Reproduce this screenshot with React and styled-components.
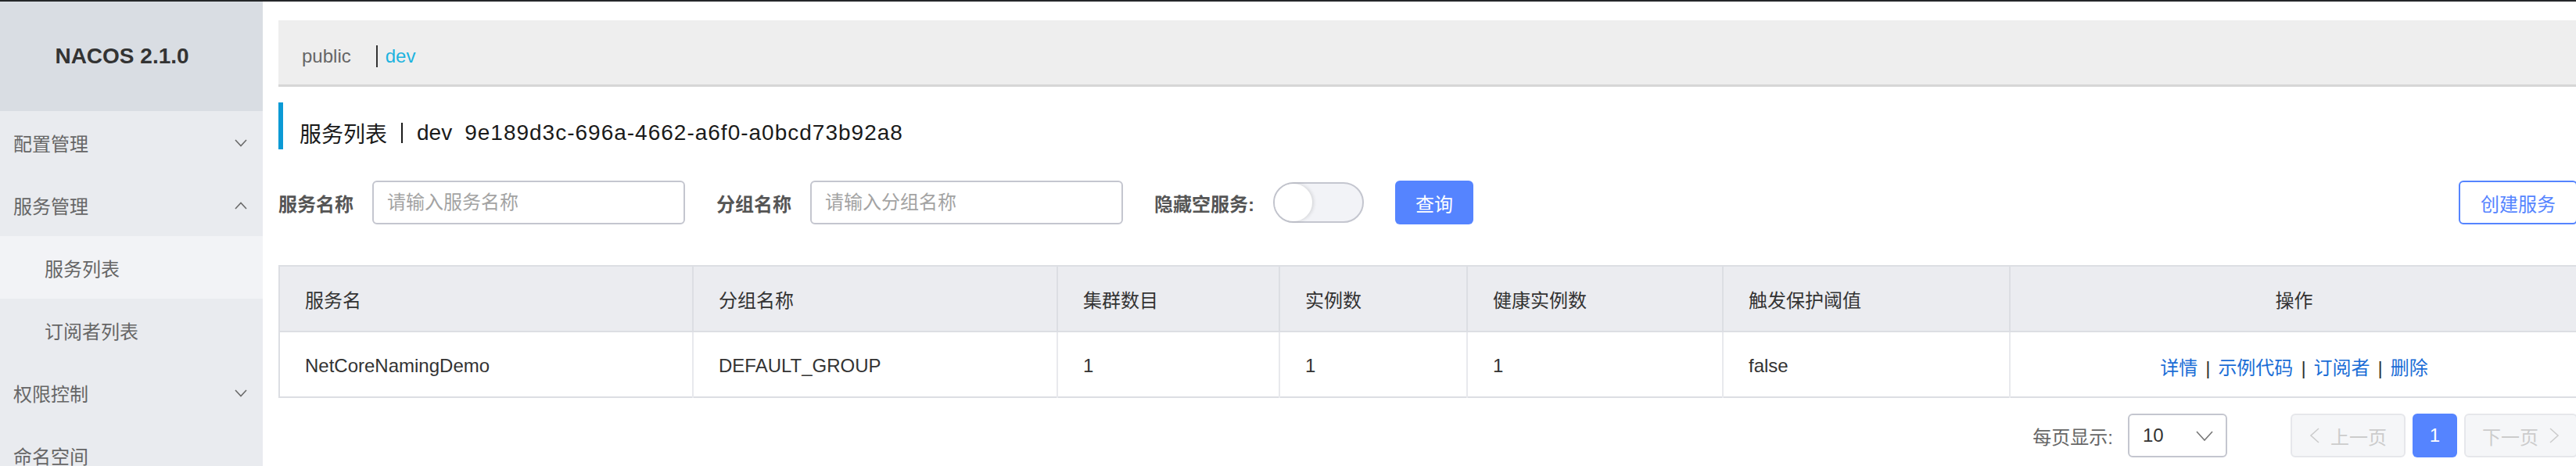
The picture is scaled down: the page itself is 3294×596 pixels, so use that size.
import React from "react";
import styled, { createGlobalStyle, css } from "styled-components";

const FONT = `"Liberation Sans", "Noto Sans CJK SC", Arial, sans-serif`;

const GlobalStyle = createGlobalStyle`
  html, body {
    margin: 0;
    padding: 0;
    background: #ffffff;
    overflow: hidden;
  }
  body {
    font-family: ${FONT};
    color: #333333;
  }
  * { box-sizing: border-box; }
`;

const Page = styled.div`
  display: flex;
  flex-direction: column;
  width: 3316px;
  height: 596px;
  overflow: hidden;
`;

const TopStrip = styled.div`
  height: 2px;
  background: #25272a;
  flex: none;
`;

const Shell = styled.div`
  display: flex;
  flex: 1;
  min-height: 0;
`;

/* ---------- Sidebar ---------- */

const Sidebar = styled.aside`
  width: 336px;
  flex: none;
  background: #e9ebef;
  display: flex;
  flex-direction: column;
  overflow: hidden;
`;

const Logo = styled.div`
  height: 140px;
  flex: none;
  background: #d9dde3;
  display: flex;
  align-items: center;
  justify-content: center;
  padding-right: 24px;
  font-size: 28px;
  font-weight: 700;
  color: #333333;
`;

const Menu = styled.nav`
  display: flex;
  flex-direction: column;
  flex: none;
`;

const MenuItem = styled.div`
  height: 80px;
  flex: none;
  display: flex;
  align-items: center;
  justify-content: space-between;
  padding: 6px 20px 0 ${(p) => (p.$sub ? "57px" : "17px")};
  font-size: 24px;
  line-height: 24px;
  color: #666666;
  background: ${(p) => (p.$active ? "#f2f3f6" : "transparent")};
`;

const ChevronSvg = styled.svg`
  width: 16px;
  height: 10px;
  flex: none;
  overflow: visible;
  margin-top: -4px;
`;

function Chevron({ up }) {
  return (
    <ChevronSvg viewBox="0 0 16 10">
      <polyline
        points={up ? "1,9 8,1.5 15,9" : "1,1 8,8.5 15,1"}
        fill="none"
        stroke="#6b6b6b"
        strokeWidth="1.6"
      />
    </ChevronSvg>
  );
}

/* ---------- Main ---------- */

const Main = styled.main`
  flex: 1;
  min-width: 0;
  padding: 24px 20px 0 20px;
  display: flex;
  flex-direction: column;
`;

const NamespaceBar = styled.div`
  height: 85px;
  flex: none;
  background: #eeeeee;
  border-bottom: 3px solid #d6d6d6;
  display: flex;
  align-items: center;
  padding: 10px 0 0 30px;
  font-size: 24px;
`;

const NsLink = styled.span`
  color: ${(p) => (p.$active ? "#1cb3df" : "#666666")};
`;

const NsSep = styled.span`
  display: inline-block;
  width: 2px;
  height: 28px;
  background: #333333;
  margin: 0 10px 0 32px;
`;

const PageTitle = styled.h1`
  margin: 20px 0 0 0;
  height: 60px;
  flex: none;
  border-left: 6px solid #0b9ad5;
  padding: 17px 0 0 21px;
  display: flex;
  align-items: center;
  font-size: 28px;
  font-weight: 400;
  color: #1a1a1a;
`;

const TitleSep = styled.span`
  display: inline-block;
  width: 2px;
  height: 26px;
  background: #1a1a1a;
  margin: 0 18px 0 18px;
`;

const TitleId = styled.span`
  margin-left: 16px;
  letter-spacing: 1px;
`;

/* ---------- Search form ---------- */

const SearchForm = styled.form`
  margin-top: 40px;
  height: 56px;
  flex: none;
  display: flex;
  align-items: center;
`;

const FormItem = styled.div`
  display: flex;
  align-items: center;
  gap: 24px;
  margin-right: 40px;
`;

const FieldLabel = styled.label`
  font-size: 24px;
  font-weight: 700;
  color: #555555;
  white-space: nowrap;
`;

const TextInput = styled.input`
  width: 400px;
  height: 56px;
  border: 2px solid #c4c6cf;
  border-radius: 6px;
  padding: 0 17px;
  font-family: ${FONT};
  font-size: 24px;
  color: #333333;
  outline: none;
  background: #ffffff;
  &::placeholder {
    color: #a3a3a3;
  }
`;

const Switch = styled.span`
  position: relative;
  display: inline-block;
  width: 116px;
  height: 52px;
  border: 2px solid #c4c6cf;
  border-radius: 26px;
  background: #f2f3f7;
`;

const Knob = styled.span`
  position: absolute;
  left: 0;
  top: 0;
  width: 48px;
  height: 48px;
  border-radius: 50%;
  background: #ffffff;
  box-shadow: 2px 0 4px rgba(0, 0, 0, 0.12);
`;

const buttonBase = css`
  height: 56px;
  border-radius: 6px;
  font-family: ${FONT};
  font-size: 24px;
  padding: 0 26px;
  cursor: pointer;
  white-space: nowrap;
`;

const PrimaryButton = styled.button`
  ${buttonBase};
  border: none;
  background: #5584ff;
  color: #ffffff;
`;

const OutlineButton = styled.button`
  ${buttonBase};
  margin-left: auto;
  border: 2px solid #5584ff;
  background: #ffffff;
  color: #5584ff;
`;

/* ---------- Table ---------- */

const DataTable = styled.table`
  margin-top: 52px;
  width: 2940px;
  table-layout: fixed;
  border-collapse: collapse;
  border: 2px solid #dcdee3;
  font-size: 24px;
`;

const Th = styled.th`
  height: 84px;
  padding: 0 32px;
  background: #ebecf0;
  font-weight: 400;
  color: #333333;
  text-align: ${(p) => (p.$center ? "center" : "left")};
  border-right: 2px solid #dcdee3;
  border-bottom: 2px solid #dcdee3;
`;

const Td = styled.td`
  height: 84px;
  padding: 4px 32px 0 32px;
  color: #333333;
  text-align: ${(p) => (p.$center ? "center" : "left")};
  border-right: 2px solid #e8e9ed;
`;

const ActionLink = styled.a`
  color: #1a6dd6;
  text-decoration: none;
`;

const ActionSep = styled.span`
  color: #333333;
  margin: 0 10px;
`;

/* ---------- Pagination ---------- */

const Pagination = styled.div`
  margin-top: 20px;
  height: 56px;
  display: flex;
  align-items: center;
  justify-content: flex-end;
  font-size: 24px;
`;

const PageSizeLabel = styled.span`
  color: #666666;
  margin-right: 19px;
`;

const Select = styled.div`
  width: 127px;
  height: 56px;
  border: 2px solid #c4c6cf;
  border-radius: 6px;
  display: flex;
  align-items: center;
  justify-content: space-between;
  padding: 0 16px 0 17px;
  color: #333333;
  margin-right: 81px;
`;

const PageButton = styled.button`
  height: 56px;
  border-radius: 6px;
  font-family: ${FONT};
  font-size: 24px;
  display: inline-flex;
  align-items: center;
  justify-content: center;
  gap: 14px;
  padding: 0;
  width: ${(p) => p.$width}px;
  margin-left: ${(p) => p.$gap || 0}px;
  ${(p) =>
    p.$current
      ? css`
          border: none;
          background: #5584ff;
          color: #ffffff;
        `
      : css`
          border: 2px solid #e6e7eb;
          background: #f5f6f8;
          color: #cccccc;
        `}
`;

const ArrowSvg = styled.svg`
  width: 13px;
  height: 20px;
  flex: none;
`;

function Arrow({ dir, color }) {
  return (
    <ArrowSvg viewBox="0 0 13 20">
      <polyline
        points={dir === "left" ? "12,1 2,10 12,19" : "1,1 11,10 1,19"}
        fill="none"
        stroke={color}
        strokeWidth="1.6"
      />
    </ArrowSvg>
  );
}

const SelectArrow = styled.svg`
  width: 22px;
  height: 13px;
`;

/* ---------- Data ---------- */

const menu = [
  { label: "配置管理", chevron: "down" },
  { label: "服务管理", chevron: "up" },
  { label: "服务列表", sub: true, active: true },
  { label: "订阅者列表", sub: true },
  { label: "权限控制", chevron: "down" },
  { label: "命名空间" },
];

const columns = [
  { title: "服务名", width: 529 },
  { title: "分组名称", width: 466 },
  { title: "集群数目", width: 284 },
  { title: "实例数", width: 240 },
  { title: "健康实例数", width: 327 },
  { title: "触发保护阈值", width: 367 },
  { title: "操作", width: 727, center: true },
];

const rows = [
  {
    name: "NetCoreNamingDemo",
    group: "DEFAULT_GROUP",
    clusters: 1,
    instances: 1,
    healthy: 1,
    threshold: "false",
  },
];

const actions = ["详情", "示例代码", "订阅者", "删除"];

export default function App() {
  return (
    <>
      <GlobalStyle />
      <Page>
        <TopStrip />
        <Shell>
          <Sidebar>
            <Logo>NACOS 2.1.0</Logo>
            <Menu>
              {menu.map((m) => (
                <MenuItem key={m.label} $sub={m.sub} $active={m.active}>
                  <span>{m.label}</span>
                  {m.chevron && <Chevron up={m.chevron === "up"} />}
                </MenuItem>
              ))}
            </Menu>
          </Sidebar>
          <Main>
            <NamespaceBar>
              <NsLink>public</NsLink>
              <NsSep />
              <NsLink $active>dev</NsLink>
            </NamespaceBar>

            <PageTitle>
              <span>服务列表</span>
              <TitleSep />
              <span>dev</span>
              <TitleId>9e189d3c-696a-4662-a6f0-a0bcd73b92a8</TitleId>
            </PageTitle>

            <SearchForm onSubmit={(e) => e.preventDefault()}>
              <FormItem>
                <FieldLabel>服务名称</FieldLabel>
                <TextInput placeholder="请输入服务名称" />
              </FormItem>
              <FormItem>
                <FieldLabel>分组名称</FieldLabel>
                <TextInput placeholder="请输入分组名称" />
              </FormItem>
              <FormItem>
                <FieldLabel>隐藏空服务:</FieldLabel>
                <Switch>
                  <Knob />
                </Switch>
              </FormItem>
              <PrimaryButton type="button">查询</PrimaryButton>
              <OutlineButton type="button">创建服务</OutlineButton>
            </SearchForm>

            <DataTable>
              <colgroup>
                {columns.map((c) => (
                  <col key={c.title} style={{ width: c.width }} />
                ))}
              </colgroup>
              <thead>
                <tr>
                  {columns.map((c) => (
                    <Th key={c.title} $center={c.center}>
                      {c.title}
                    </Th>
                  ))}
                </tr>
              </thead>
              <tbody>
                {rows.map((r) => (
                  <tr key={r.name}>
                    <Td>{r.name}</Td>
                    <Td>{r.group}</Td>
                    <Td>{r.clusters}</Td>
                    <Td>{r.instances}</Td>
                    <Td>{r.healthy}</Td>
                    <Td>{r.threshold}</Td>
                    <Td $center>
                      {actions.map((a, i) => (
                        <React.Fragment key={a}>
                          {i > 0 && <ActionSep>|</ActionSep>}
                          <ActionLink href="#">{a}</ActionLink>
                        </React.Fragment>
                      ))}
                    </Td>
                  </tr>
                ))}
              </tbody>
            </DataTable>

            <Pagination>
              <PageSizeLabel>每页显示:</PageSizeLabel>
              <Select>
                <span>10</span>
                <SelectArrow viewBox="0 0 22 13">
                  <polyline
                    points="1,1 11,12 21,1"
                    fill="none"
                    stroke="#777777"
                    strokeWidth="1.6"
                  />
                </SelectArrow>
              </Select>
              <PageButton $width={147} type="button">
                <Arrow dir="left" color="#cccccc" />
                <span>上一页</span>
              </PageButton>
              <PageButton $width={57} $gap={9} $current type="button">
                1
              </PageButton>
              <PageButton $width={145} $gap={9} type="button">
                <span>下一页</span>
                <Arrow dir="right" color="#cccccc" />
              </PageButton>
            </Pagination>
          </Main>
        </Shell>
      </Page>
    </>
  );
}
